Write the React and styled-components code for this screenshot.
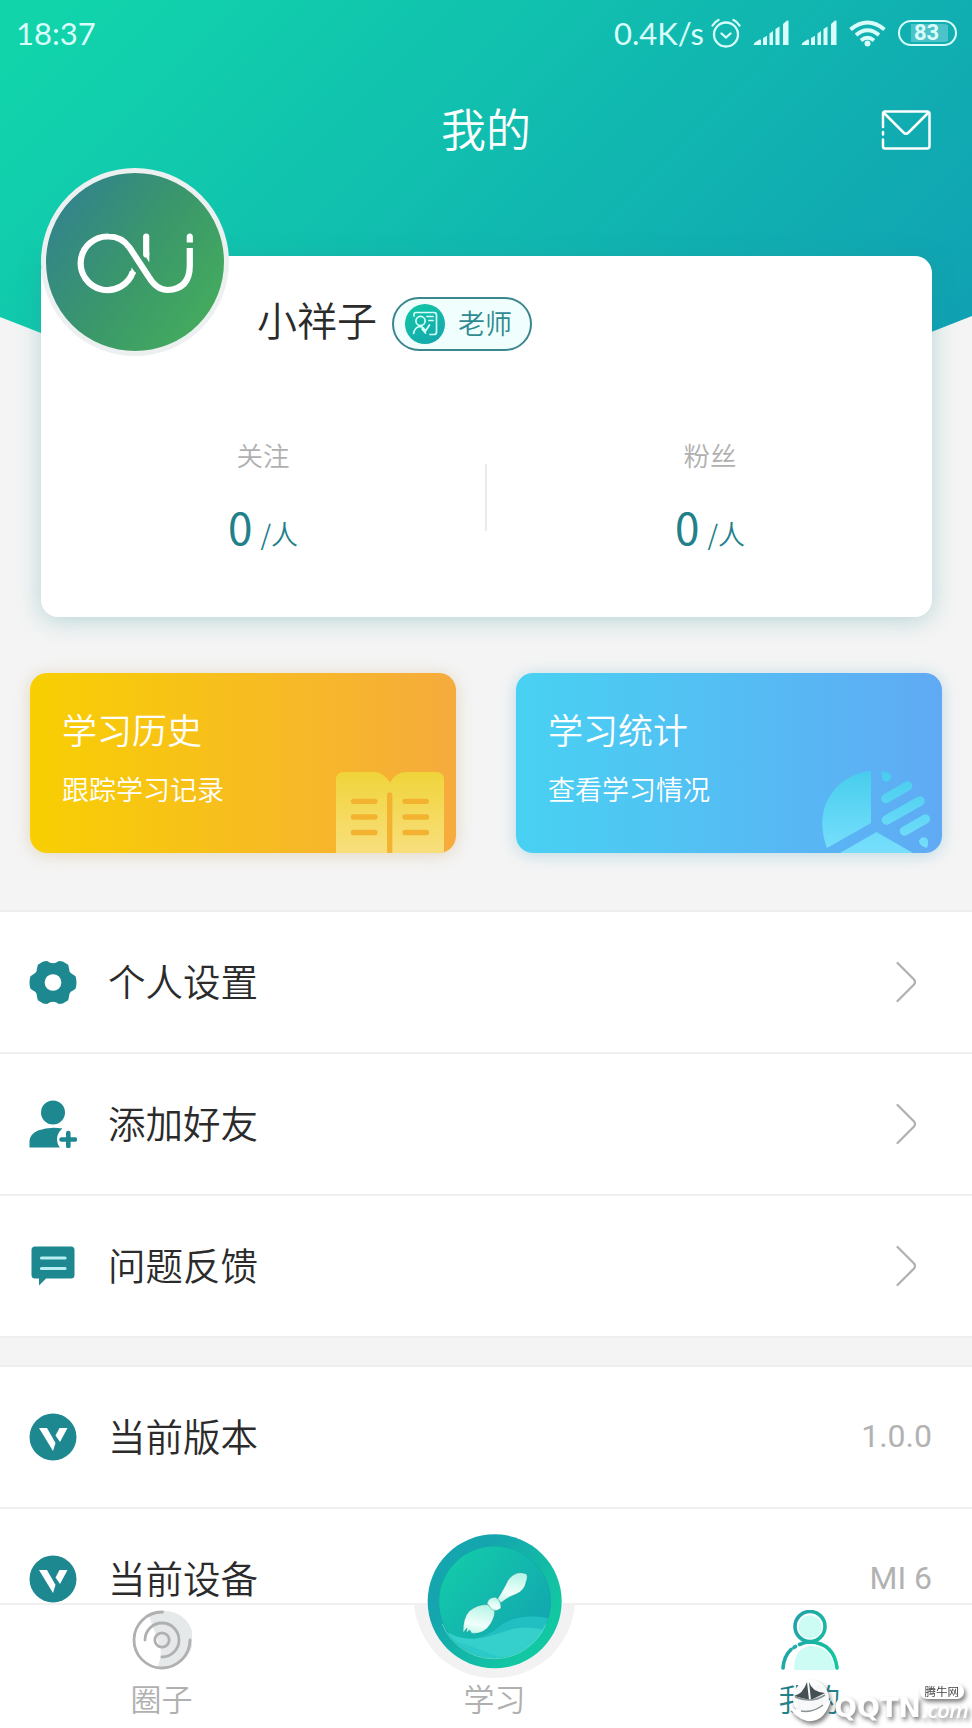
import styled, { createGlobalStyle } from 'styled-components';

const GlobalStyle = createGlobalStyle`
  * {
    box-sizing: border-box;
  }
  body {
    margin: 0;
    background: #f4f4f4;
    font-family: 'Noto Sans CJK SC', 'Noto Sans', sans-serif;
    font-weight: 350;
  }
`;

const AlarmIcon = () => (
  <svg width='30' height='30' viewBox='0 0 30 30' fill='none' stroke='#d9fdfb' strokeWidth='2.3' strokeLinecap='round'>
    <circle cx='15' cy='16.5' r='12' />
    <path d='M10.5 15.5l4.5 4 4.5-4M1.5 7.5Q4 3.500 7.500 2M28.500 7.500Q26 3.500 22.500 2' />
  </svg>
);

const SignalIcon = () => (
  <svg width='36' height='26' viewBox='0 0 36 26' fill='#d9fdfb'>
    <path d='M1 25Q0 24 2 22.500L6.500 19.500Q8 19 8 20.500V25Z' />
    <path d='M10 18l4-2.300V25h-4zM16.500 13.500l3.500-2.500V25h-3.500zM22.500 9l4-2.500V25h-4zM30 4l4-3.500Q35.500 0 35.500 1.500V25H30z' />
  </svg>
);

const WifiIcon = () => (
  <svg width='37' height='27' viewBox='0 0 37 27' fill='none' stroke='#d9fdfb' strokeWidth='3.800'>
    <path d='M1.500 9.500Q18.500-4.500 35.500 9.500M7 15Q18.500 5.500 30 15M12 20.500Q18.500 15 25 20.500' />
    <circle cx='18.500' cy='23.500' r='3' fill='#d9fdfb' stroke='none' />
  </svg>
);

const MailIcon = () => (
  <svg width='50' height='40' viewBox='0 0 50 40' fill='none' stroke='#fff' strokeWidth='2.500' strokeLinecap='round'>
    <path d='M2 17V4Q2 1.500 4 1.500H46Q48.500 1.500 48.500 4V36Q48.500 38.500 46 38.500H4Q2 38.500 2 36.500V29.500M2 22v2.500' />
    <path d='M3 3L22.500 22.500Q25 25 27.500 22.500L47 3' />
  </svg>
);

const AvatarLogo = () => (
  <svg width='130' height='72' viewBox='69.500 224.500 130 72' fill='none' stroke='#fff' strokeWidth='6.200'>
    <path d='M132.500 270A26.800 26.800 0 1 1 108 235Q121 235 129 246L148 275Q156 288.500 167 288.500Q189.300 287.500 189.300 264V246.500' />
    <path d='M145.700 235V253' strokeLinecap='round' />
    <path d='M142.600 251H148.800V261Z' fill='#fff' stroke='none' />
    <path d='M131 266L135.500 272L130 277Z' fill='#fff' stroke='none' />
    <path d='M186.200 241V235.500Q186.200 232 189.300 232T192.400 235.500V241Z' fill='#fff' stroke='none' />
  </svg>
);

const TeacherIcon = () => (
  <svg width='26' height='26' viewBox='0 0 26 26' fill='none' stroke='#d8fffb' strokeWidth='1.700' strokeLinecap='round'>
    <path d='M2 5V3.500Q2 1.500 4 1.500H22Q24.500 1.500 24.500 4V21Q24.500 23.500 22 23.500H18M15 5.500h6M17 9.500h4' />
    <circle cx='8.500' cy='10' r='4.600' />
    <path d='M1.500 22.500Q3 15.500 8.500 15.500Q11.500 16 13.500 20L17.500 14M10 18L13.500 22' />
  </svg>
);

const BookIcon = () => (
  <svg width='108' height='81' viewBox='0 0 108 81'>
    <defs>
      <linearGradient id='book' x1='0' y1='0' x2='0' y2='1'>
        <stop offset='0' stopColor='#f0d43a' />
        <stop offset='1' stopColor='#f8df7d' />
      </linearGradient>
    </defs>
    <path d='M0 81V8Q0 0 8 0H38Q47 0 54 10.500Q60 0 70 0H100Q108 0 108 8V81Z' fill='url(#book)' />
    <path
      d='M53.700 23V79M17.500 29.300H39M17.500 45H39M17.500 60.500H39M69 29.300H90.500M69 45H90.500M69 60.500H90.500'
      stroke='#f3b230'
      strokeWidth='5.300'
      strokeLinecap='round'
    />
  </svg>
);

const PieIcon = () => (
  <svg width='108' height='82' viewBox='0 0 108 82'>
    <defs>
      <linearGradient id='pie' gradientUnits='userSpaceOnUse' x1='0' y1='0' x2='0' y2='82'>
        <stop offset='0' stopColor='#47cdec' />
        <stop offset='1' stopColor='#78dffd' />
      </linearGradient>
    </defs>
    <g fill='url(#pie)'>
      <path d='M49 0V52L5 77Q-5 50 6 28Q20 3 49 0Z' />
      <path d='M18 82L54.500 61L91 82Z' />
      <path d='M59.500 0L67 2Q71 5 68 9Q64 12 60.500 9Z' />
      <path d='M97 70Q99 65 103.500 66.500Q108 69 105 77Q97 75 97 70Z' />
    </g>
    <path d='M64 27.500L85.500 15M64.500 49L98 30M82.500 60L103.500 48' stroke='url(#pie)' strokeWidth='9.500' strokeLinecap='round' />
  </svg>
);

const GearIcon = () => (
  <svg width='49' height='45' viewBox='0 0 49 45'>
    <path
      d='M14.500 1L18.500 .5Q24.500 5 30.500 .5L34.500 1L40 4.500L41 9Q41 12.500 44.500 14L47.500 16Q49.500 22.500 47.500 29L44.500 31Q41 32.500 41 36L40 40.500L34.500 44L30.500 44.500Q24.500 40 18.500 44.500L14.500 44L9 40.500L8 36Q8 32.500 4.500 31L1.500 29Q-.5 22.500 1.500 16L4.500 14Q8 12.500 8 9L9 4.500Z'
      fill='#1d8890'
    />
    <circle cx='24.500' cy='22.500' r='8.500' fill='#fff' />
  </svg>
);

const AddFriendIcon = () => (
  <svg width='48' height='48' viewBox='0 0 48 48' fill='#1d8890'>
    <circle cx='24' cy='12.500' r='12' />
    <path d='M.5 47.500V41Q1 34 9 30.500Q20 26.500 33.500 28.500Q28 33 28 39Q28 44 31 47.500Z' />
    <path d='M39.300 33v13M32.500 39.500h13.500' stroke='#1d8890' strokeWidth='4.600' strokeLinecap='round' />
  </svg>
);

const FeedbackIcon = () => (
  <svg width='44' height='40' viewBox='0 0 44 40'>
    <path d='M4 .5H40Q43.500 .5 43.500 4V29Q43.500 32.500 40 32.500H15L8 39.500V32.500H4Q.5 32.500 .5 29V4Q.5 .5 4 .5Z' fill='#1d8890' />
    <path d='M10.500 12H34M10.500 22.500H34' stroke='#b9eff1' strokeWidth='3.200' strokeLinecap='round' />
  </svg>
);

const VersionIcon = () => (
  <svg width='48' height='48' viewBox='0 0 48 48'>
    <circle cx='24' cy='24' r='23.500' fill='#1d8890' />
    <path d='M10 15H18L26.500 30L24 38Z' fill='#fff' />
    <path d='M30.500 15H38.500L31 29L26.500 22.500Z' fill='#fff' />
  </svg>
);

const ChevronIcon = () => (
  <svg width='21' height='42' viewBox='0 0 21 42' fill='none' stroke='#b0b0b0' strokeWidth='2.200' strokeLinecap='round'>
    <path d='M1.500 2L18 18.500Q20 21 18 23.500L1.500 40' />
  </svg>
);

const CircleIcon = () => (
  <svg width='60' height='60' viewBox='0 0 60 60' fill='none' stroke='#b0b0b0' strokeWidth='2.800' strokeLinecap='round'>
    <path d='M17 6A28 28 0 1 1 26 56Q31 42 27 34Z' fill='#e6e9ea' stroke='none' />
    <path d='M30.500 2A28 28 0 1 0 58 30' />
    <path d='M13 30A17 17 0 1 1 30 47' />
    <circle cx='30' cy='30' r='7.200' />
  </svg>
);

const PersonIcon = () => (
  <svg width='58' height='60' viewBox='0 0 58 60' fill='none' strokeWidth='3.600' strokeLinecap='round'>
    <defs>
      <linearGradient id='person' gradientUnits='userSpaceOnUse' x1='4' y1='20' x2='54' y2='45'>
        <stop offset='0' stopColor='#239faa' />
        <stop offset='1' stopColor='#12c69f' />
      </linearGradient>
    </defs>
    <circle cx='29' cy='17' r='11.500' fill='#cdfcf4' />
    <path d='M13 60Q13 36 31 36Q50 36 54 60Z' fill='#cdfcf4' />
    <circle cx='29' cy='16.500' r='15' stroke='url(#person)' />
    <path d='M2 58Q3 46 10 39.500M13 37.500l1.500-1M18.500 34.500Q24 32 29 32Q53 33 56 58' stroke='url(#person)' />
  </svg>
);

const BroomIcon = () => (
  <svg width='161' height='144' viewBox='105 100 483 432'>
    <defs>
      <linearGradient id='ring' x1='0.100' y1='0.200' x2='0.900' y2='0.800'>
        <stop offset='0.200' stopColor='#14a5ae' />
        <stop offset='0.900' stopColor='#12c8a2' />
      </linearGradient>
      <linearGradient id='disc' x1='0.100' y1='0.100' x2='0.900' y2='0.800'>
        <stop offset='0' stopColor='#13caaa' />
        <stop offset='1' stopColor='#12a6b0' />
      </linearGradient>
      <linearGradient id='broom' x1='0.600' y1='0' x2='0.400' y2='1'>
        <stop offset='0' stopColor='#b4f5e6' />
        <stop offset='0.700' stopColor='#f1fffb' />
        <stop offset='1' stopColor='#c5f8ea' />
      </linearGradient>
      <clipPath id='discClip'>
        <circle cx='347' cy='304' r='168' />
      </clipPath>
    </defs>
    <path d='M105 312H588Q580 400 513 468Q440 532 347 532Q253 532 180 468Q114 400 105 312Z' fill='#f2f2f2' />
    <circle cx='347' cy='302' r='201' fill='url(#ring)' />
    <circle cx='347' cy='304' r='168' fill='url(#disc)' stroke='#119f9f' strokeOpacity='0.500' strokeWidth='3' />
    <g clipPath='url(#discClip)'>
      <path d='M260 420Q330 410 370 370Q430 335 520 355V480H260Z' fill='#22bfc2' />
      <path d='M170 370Q230 425 310 412Q350 402 400 385Q450 372 520 395V480H170Z' fill='#35d0cb' />
      <path d='M180 410Q270 430 360 470V500H180Z' fill='#2bc9c8' />
    </g>
    <path d='M190 370A168 168 0 0 0 500 372' fill='none' stroke='#75e5d8' strokeWidth='2' />
    <g stroke='#0d8589' strokeOpacity='0.350' strokeWidth='3' fill='url(#broom)'>
      <path d='M355 296Q376 262 386 240Q398 222 416 217Q424 214 441 219Q448 224 442 242Q437 270 412 280Q388 288 366 306Z' />
      <path d='M326 312Q296 310 270 332Q252 352 252 396L264 382L262 396L272 388L278 398Q316 402 336 368Q350 342 346 328Z' />
      <path d='M324 308Q330 288 350 290Q366 300 366 322Q354 334 340 328Z' />
    </g>
  </svg>
);

const WatermarkLogo = () => (
  <svg width='46' height='44' viewBox='0 0 46 44'>
    <ellipse cx='24' cy='20' rx='18' ry='19' fill='#fff' fillOpacity='0.950' />
    <path d='M2 26Q22 42 44 20Q38 44 20 42Q6 38 2 26Z' fill='#fff' />
    <path d='M20 3L22 21L7 17Q16 15 20 3ZM22 3Q25 13 38 14L24 21Z' fill='#455054' />
    <path d='M8 18Q24 25 38 16M14 32Q26 34 36 26' stroke='#8a9294' strokeWidth='1.500' fill='none' />
  </svg>
);

const menuItems = [
  { icon: <GearIcon />, label: '个人设置' },
  { icon: <AddFriendIcon />, label: '添加好友' },
  { icon: <FeedbackIcon />, label: '问题反馈' },
];

const infoItems = [
  { label: '当前版本', value: '1.0.0' },
  { label: '当前设备', value: 'MI 6' },
];

const App = () => {
  return (
    <Page>
      <GlobalStyle />
      <Content>
        <Hero>
          <StatusBar>
            <Time>18:37</Time>
            <StatusIcons>
              <Speed>0.4K/s</Speed>
              <AlarmIcon />
              <SignalIcon />
              <SignalIcon />
              <WifiIcon />
              <Battery>
                <BatteryLevel>83</BatteryLevel>
              </Battery>
            </StatusIcons>
          </StatusBar>
          <TitleBar>
            <Title>我的</Title>
            <MailIcon />
          </TitleBar>
        </Hero>
        <ProfileCard>
          <Avatar>
            <AvatarLogo />
          </Avatar>
          <NameRow>
            <Name>小祥子</Name>
            <Badge>
              <BadgeIcon>
                <TeacherIcon />
              </BadgeIcon>
              <BadgeText>老师</BadgeText>
            </Badge>
          </NameRow>
          <Stats>
            <Stat>
              <StatLabel>关注</StatLabel>
              <StatValue>
                <b>0</b>/人
              </StatValue>
            </Stat>
            <StatDivider />
            <Stat>
              <StatLabel>粉丝</StatLabel>
              <StatValue>
                <b>0</b>/人
              </StatValue>
            </Stat>
          </Stats>
        </ProfileCard>
        <Actions>
          <ActionCard $from='#f8cf02' $to='#f6ab3d' $shadow='rgba(190, 150, 80, 0.3)'>
            <div>
              <ActionTitle>学习历史</ActionTitle>
              <ActionText>跟踪学习记录</ActionText>
            </div>
            <BookIcon />
          </ActionCard>
          <ActionCard $from='#48d1f2' $to='#60aaf4' $shadow='rgba(80, 170, 200, 0.35)'>
            <div>
              <ActionTitle>学习统计</ActionTitle>
              <ActionText>查看学习情况</ActionText>
            </div>
            <PieIcon />
          </ActionCard>
        </Actions>
        <Menu>
          {menuItems.map((item) => (
            <MenuRow key={item.label}>
              <MenuIcon>{item.icon}</MenuIcon>
              <MenuLabel>{item.label}</MenuLabel>
              <Arrow>
                <ChevronIcon />
              </Arrow>
            </MenuRow>
          ))}
        </Menu>
        <Menu $gap='27px'>
          {infoItems.map((item) => (
            <MenuRow key={item.label}>
              <MenuIcon>
                <VersionIcon />
              </MenuIcon>
              <MenuLabel>{item.label}</MenuLabel>
              <MenuValue>{item.value}</MenuValue>
            </MenuRow>
          ))}
        </Menu>
      </Content>
      <TabBar>
        <Tab>
          <CircleIcon />
          <TabLabel>圈子</TabLabel>
        </Tab>
        <Tab $raised>
          <BroomIcon />
          <TabLabel $raised>学习</TabLabel>
        </Tab>
        <Tab>
          <PersonIcon />
          <TabLabel $active>我的</TabLabel>
        </Tab>
      </TabBar>
      <Watermark>
        <WatermarkLogo />
        <WatermarkName>QQTN</WatermarkName>
        <WatermarkDomain>.com</WatermarkDomain>
        <WatermarkTag>腾牛网</WatermarkTag>
      </Watermark>
    </Page>
  );
};

export default App;

const Page = styled.div`
  position: relative;
  display: flex;
  flex-direction: column;
  width: 972px;
  height: 1728px;
  overflow: hidden;
  background: #f4f4f4;
`;

const Content = styled.div`
  flex: 1;
  min-height: 0;
  overflow: hidden;
`;

const Hero = styled.div`
  height: 507px;
  background: linear-gradient(135deg, #11d4ab 5%, #10a2b3 86%);
  clip-path: polygon(0 0, 100% 0, 100% 316px, 50% 507px, 0 317px);
`;

const StatusBar = styled.div`
  display: flex;
  justify-content: space-between;
  align-items: center;
  height: 66px;
  padding: 0 15px 0 16px;
  color: #d9fdfb;
`;

const Time = styled.span`
  font-family: Lato, sans-serif;
  font-size: 31px;
  font-weight: 400;
  line-height: 40px;
`;

const StatusIcons = styled.div`
  display: flex;
  align-items: center;
  gap: 12px;

  svg {
    flex: none;
  }
`;

const Speed = styled(Time)`
  margin-right: -5px;
`;

const Battery = styled.div`
  display: flex;
  align-items: center;
  justify-content: center;
  width: 59px;
  height: 26px;
  border: 2.5px solid #d9fdfb;
  border-radius: 13px;
  background: linear-gradient(90deg, transparent 20%, #4cc3c8 20%, #4cc3c8 88%, transparent 88%);
  background-clip: content-box;
  padding: 2px;
`;

const BatteryLevel = styled.span`
  margin-right: 2px;
  font-family: Roboto, sans-serif;
  font-size: 22px;
  font-weight: 700;
  line-height: 20px;
`;

const TitleBar = styled.div`
  display: grid;
  grid-template-columns: 1fr auto 1fr;
  align-items: center;
  height: 128px;
  padding: 0 41px;

  svg {
    grid-column: 3;
    justify-self: end;
  }
`;

const Title = styled.h1`
  grid-column: 2;
  margin: 0 0 4px;
  color: #fff;
  font-size: 45px;
  font-weight: 350;
  line-height: 60px;
`;

const ProfileCard = styled.div`
  position: relative;
  height: 361px;
  margin: -251px 40px 0 41px;
  padding-top: 41px;
  border-radius: 17px;
  background: #fff;
  box-shadow: 0 3px 24px rgba(40, 140, 145, 0.3);
`;

const Avatar = styled.div`
  position: absolute;
  top: -88px;
  left: 0;
  display: flex;
  align-items: center;
  justify-content: center;
  width: 188px;
  height: 188px;
  border: 5px solid #edf0f0;
  border-radius: 50%;
  background: linear-gradient(125deg, #33848b 12%, #3a976b 50%, #44ab5e 88%);
`;

const NameRow = styled.div`
  display: flex;
  align-items: center;
  height: 54px;
  padding-left: 216px;
`;

const Name = styled.span`
  width: 135px;
  margin-bottom: 10px;
  color: #2b2b2b;
  font-size: 40px;
  line-height: 44px;
`;

const Badge = styled.div`
  display: flex;
  align-items: center;
  gap: 13px;
  width: 140px;
  height: 54px;
  padding-left: 11px;
  border: 2px solid #3b868d;
  border-radius: 27px;
  background: #f0fffd;
`;

const BadgeText = styled.span`
  margin-bottom: 3px;
  color: #2f8a92;
  font-size: 27px;
  line-height: 40px;
`;

const BadgeIcon = styled.span`
  display: flex;
  align-items: center;
  justify-content: center;
  width: 40px;
  height: 40px;
  border-radius: 50%;
  background: linear-gradient(150deg, #12c8a5, #15a4ae);
`;

const Stats = styled.div`
  display: flex;
  align-items: center;
  margin-top: 80px;
`;

const Stat = styled.div`
  display: flex;
  flex: 1;
  flex-direction: column;
  align-items: center;
`;

const StatLabel = styled.span`
  color: #b0b0b0;
  font-size: 26.5px;
  line-height: 48px;
`;

const StatValue = styled.span`
  margin-top: 14px;
  color: #22808a;
  font-size: 27px;
  line-height: 66px;

  b {
    margin-right: 8px;
    font-size: 44px;
    font-weight: 400;
  }
`;

const StatDivider = styled.div`
  width: 2px;
  height: 67px;
  margin: 0 1px 4px 0;
  background: #ebebeb;
`;

const Actions = styled.div`
  display: grid;
  grid-template-columns: 1fr 1fr;
  gap: 60px;
  padding: 56px 30px 57px;
`;

const ActionCard = styled.div`
  display: flex;
  align-items: flex-end;
  justify-content: space-between;
  height: 180px;
  padding: 0 12px 0 32px;
  overflow: hidden;
  border-radius: 17px;
  background: linear-gradient(90deg, ${(props) => props.$from}, ${(props) => props.$to});
  box-shadow: 0 2px 16px ${(props) => props.$shadow};

  > div {
    align-self: flex-start;
    padding-top: 30px;
  }
`;

const ActionTitle = styled.div`
  color: #fff;
  font-size: 35px;
  line-height: 52px;
  white-space: nowrap;
`;

const ActionText = styled.div`
  margin-top: 14px;
  color: #fff;
  font-size: 27px;
  line-height: 40px;
  white-space: nowrap;
`;

const Menu = styled.div`
  margin-top: ${(props) => props.$gap || 0};
  border-top: 2px solid #eeeeee;
  background: #fff;
`;

const MenuRow = styled.div`
  display: flex;
  align-items: center;
  height: 142px;
  padding: 0 40px 0 29px;
  border-bottom: 2px solid #efefef;
`;

const MenuIcon = styled.span`
  display: flex;
  justify-content: center;
  width: 48px;
`;

const MenuLabel = styled.span`
  flex: 1;
  margin: 0 0 5px 31px;
  color: #2b2b2b;
  font-size: 37.5px;
  line-height: 42px;
`;

const Arrow = styled.span`
  display: flex;
  margin-right: 15px;
`;

const MenuValue = styled.span`
  margin-bottom: 2px;
  color: #b2b2b2;
  font-family: Roboto, sans-serif;
  font-size: 32px;
  font-weight: 400;
  line-height: 42px;
`;

const TabBar = styled.div`
  position: relative;
  display: grid;
  grid-template-columns: 323px 343px 287px;
  height: 125px;
  border-top: 2px solid #f0f0f0;
  background: #fff;
`;

const Tab = styled.div`
  display: flex;
  flex-direction: column;
  align-items: center;
  margin-top: ${(props) => (props.$raised ? '-71px' : '5px')};

  svg {
    flex: none;
  }
`;

const TabLabel = styled.span`
  margin-top: ${(props) => (props.$raised ? '-3px' : '5px')};
  color: ${(props) => (props.$active ? '#22808a' : '#b0b0b0')};
  font-size: 31px;
  line-height: 46px;
`;

const Watermark = styled.div`
  position: absolute;
  right: 2px;
  bottom: 5px;
  display: flex;
  align-items: flex-end;
  width: 183px;
  height: 46px;
  color: #fff;
  filter: drop-shadow(2px 3px 2px rgba(60, 60, 60, 0.65));
`;

const WatermarkName = styled.span`
  width: 88px;
  margin-left: 1px;
  font-family: 'DejaVu Sans', sans-serif;
  font-size: 27px;
  font-weight: 700;
  line-height: 30px;
`;

const WatermarkDomain = styled.span`
  font-family: 'Open Sans', sans-serif;
  font-size: 22px;
  font-style: italic;
  font-weight: 600;
  letter-spacing: -0.5px;
  line-height: 27px;
`;

const WatermarkTag = styled.span`
  position: absolute;
  top: 7px;
  right: 6px;
  padding: 0 5px;
  border-radius: 7px;
  background: #fff;
  color: #444;
  font-size: 11.5px;
  font-weight: 400;
  line-height: 15px;
`;
